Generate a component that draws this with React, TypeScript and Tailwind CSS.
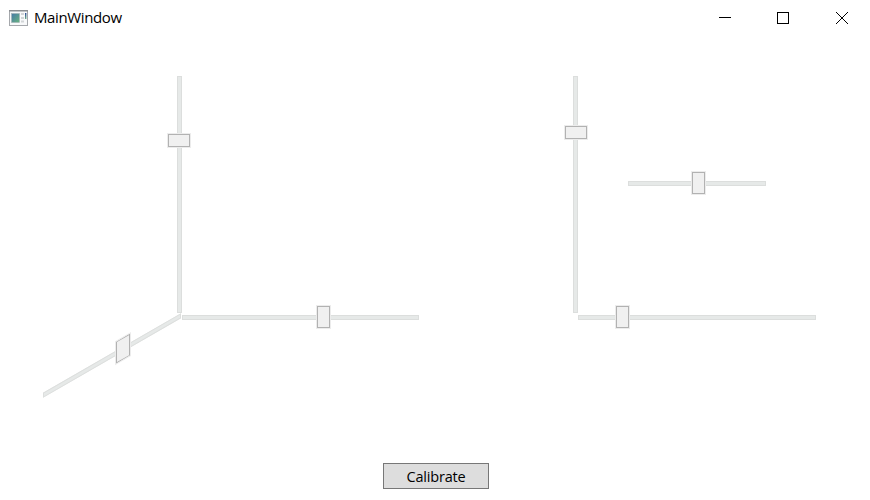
type SliderProps = { place: string; thumb: string; vertical?: boolean };

function Slider({ place, thumb, vertical = false }: SliderProps) {
  return (
    <div className={`absolute border border-[#dcdedd] bg-[#e6e9e8] ${place}`}>
      <div
        className={`absolute border border-[#b2b2b2] bg-[#f0f0f0] outline outline-[0.5px] outline-[#ececec] ${
          vertical ? "h-[13px] w-[22px]" : "h-[22px] -top-[10px]"
        } ${thumb}`}
      />
    </div>
  );
}

function AppIcon() {
  return (
    <svg width="20" height="17" viewBox="0 0 20 17">
      <defs>
        <linearGradient id="screen" x1="0" y1="0" x2="1" y2="1">
          <stop offset="0" stopColor="#4779a8" />
          <stop offset="1" stopColor="#68b47f" />
        </linearGradient>
        <linearGradient id="bar" x1="0" y1="0" x2="0" y2="1">
          <stop offset="0" stopColor="#304c9a" />
          <stop offset="1" stopColor="#6cae86" />
        </linearGradient>
      </defs>
      <rect x="0.5" y="0.5" width="18" height="15" fill="#f8f9fa" stroke="#a5a8ac" />
      <path d="M0 0.75h19" stroke="#8b8e92" strokeWidth="1.5" />
      <rect x="2.5" y="3.5" width="8" height="9" fill="url(#screen)" stroke="#a4b1b4" strokeWidth="0.6" />
      <path d="M12 4h3M12 8h3M12 11.5h3" stroke="#d2d5d7" strokeWidth="2" />
      <rect x="16" y="3" width="1.4" height="6" fill="url(#bar)" />
    </svg>
  );
}

export default function App() {
  return (
    <div className="flex h-[500px] w-[870px] flex-col overflow-hidden bg-white font-['Open_Sans','Noto_Sans',sans-serif] text-black">
      <header className="flex h-9 shrink-0 items-center pl-[9px]">
        <AppIcon />
        <span className="-mt-[2px] ml-[5px] w-[88px] whitespace-nowrap text-[15px] leading-5 tracking-[-0.37px]">MainWindow</span>
        <div className="ml-auto flex h-full items-center pr-[22px]">
          <svg width="12" height="12" viewBox="0 0 12 12" className="mr-[46px]" stroke="#000" shapeRendering="crispEdges">
            <path d="M0 5.5h12" />
          </svg>
          <svg width="12" height="12" viewBox="0 0 12 12" className="mr-[47px]" fill="none" stroke="#000">
            <rect x="0.5" y="0.5" width="11" height="11" />
          </svg>
          <svg width="12" height="12" viewBox="0 0 12 12" stroke="#000">
            <path d="M0 0l12 12M12 0L0 12" />
          </svg>
        </div>
      </header>
      <main className="relative flex-1">
        <Slider vertical place="left-[177px] top-[40px] h-[237px] w-[5px]" thumb="top-[57px] -left-[10px]" />
        <Slider place="left-[182px] top-[279px] h-[5px] w-[237px]" thumb="left-[134px] w-[13px]" />
        <Slider place="left-[43px] top-[317px] h-[5px] w-[138px] -skew-y-30" thumb="left-[72px] w-[14px]" />
        <Slider vertical place="left-[573px] top-[40px] h-[237px] w-[5px]" thumb="top-[49px] -left-[9px]" />
        <Slider place="left-[578px] top-[279px] h-[5px] w-[238px]" thumb="left-[37px] w-[13px]" />
        <Slider place="left-[628px] top-[145px] h-[5px] w-[138px]" thumb="left-[63px] w-[13px]" />
      </main>
      <footer className="flex h-[37px] shrink-0 justify-center">
        <button className="ml-[2px] h-[26px] w-[106px] border border-[#777] bg-[#ddd] pt-px text-[14.5px] leading-5 tracking-[-0.2px]">
          Calibrate
        </button>
      </footer>
    </div>
  );
}
